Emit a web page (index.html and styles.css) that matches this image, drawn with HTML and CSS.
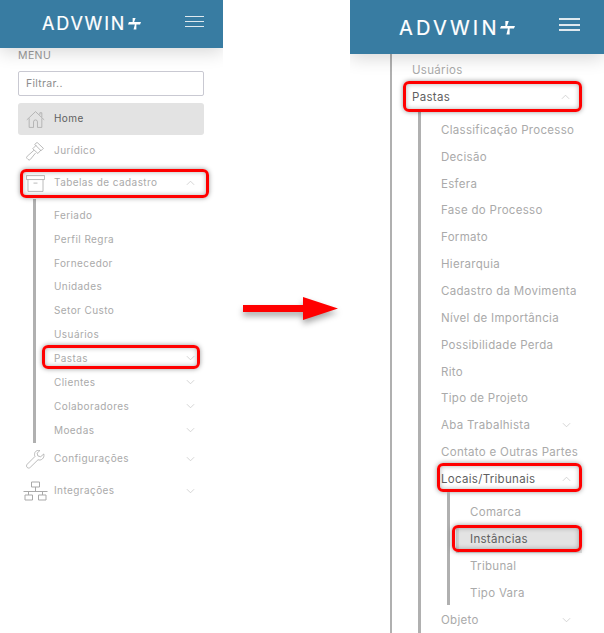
FILE: index.html
```html
<!DOCTYPE html>
<html lang="pt">
<head>
<meta charset="utf-8">
<title>Advwin menu</title>
<link rel="stylesheet" href="styles.css">
</head>
<body>
<svg class="defs" width="0" height="0" aria-hidden="true">
  <symbol id="down" viewBox="0 0 10 6"><path d="M1 1l4 4 4-4" fill="none" stroke="currentColor" stroke-width=".8"/></symbol>
  <symbol id="up" viewBox="0 0 10 6"><path d="M1 5l4-4 4 4" fill="none" stroke="currentColor" stroke-width=".8"/></symbol>
  <symbol id="plus" viewBox="0 0 14 14"><path d="M5 5.500V1h3.200L6.600 5.500H14L13 8H9v5.500H6L7.400 8H0l1-2.500z" fill="#fff"/></symbol>
</svg>
<main class="page">
  <section class="panel panel-left">
    <header class="top top-left">
      <div class="logo"><span>ADVWIN</span><svg class="plus"><use href="#plus"/></svg></div>
      <button class="burger" aria-label="Menu"><i></i><i></i><i></i></button>
    </header>
    <nav class="side">
      <div class="menu-label">MENU</div>
      <input class="filter" placeholder="Filtrar..">
      <div class="row active">
        <svg class="ico" viewBox="0 0 24 24" fill="none" stroke="currentColor"><path d="M1 12.500L12 2l11 10.500M4 10.500V22h5.500v-7a2.500 2.500 0 0 1 5 0v7H20V10.500M17.500 6V3.500H20V9"/></svg>
        <span class="dark">Home</span>
      </div>
      <div class="row">
        <svg class="ico" viewBox="0 0 24 24" fill="none" stroke="currentColor"><path d="M11 3l3-2.500 8 7.500-3 3zM13 4l-4.500 4.500 6.500 6 4-4.500M10 10.500L1.500 18a2 2 0 0 0 0 3l1 1a2 2 0 0 0 3 0L12 14"/></svg>
        <span>Jurídico</span>
      </div>
      <div class="row mark mark-tabelas">
        <svg class="ico" viewBox="0 0 24 24" fill="none" stroke="currentColor"><path d="M0.500 2h23v5H.5zM2.500 7v15h19V7M9.500 11.500h5"/></svg>
        <span>Tabelas de cadastro</span>
        <svg class="chev"><use href="#up"/></svg>
      </div>
      <ul class="sub">
        <li>Feriado</li>
        <li>Perfil Regra</li>
        <li>Fornecedor</li>
        <li>Unidades</li>
        <li>Setor Custo</li>
        <li>Usuários</li>
        <li class="mark mark-pastas">Pastas<svg class="chev"><use href="#down"/></svg></li>
        <li>Clientes<svg class="chev"><use href="#down"/></svg></li>
        <li>Colaboradores<svg class="chev"><use href="#down"/></svg></li>
        <li>Moedas<svg class="chev"><use href="#down"/></svg></li>
      </ul>
      <div class="row">
        <svg class="ico" viewBox="0 0 24 24" fill="none" stroke="currentColor"><path d="M22.500 5l-4 3.500-3.500-1-1-3.500L17.500.8C14-.5 10.500 2 10.800 6c0 1 .2 1.500.5 2.200L1.500 18c-1.300 1.500-1 3 0 4s2.700 1.300 4-.2l9.700-9.500c4 1.500 8.500-2 7.300-7.300z"/></svg>
        <span>Configurações</span>
        <svg class="chev"><use href="#down"/></svg>
      </div>
      <div class="row">
        <svg class="ico ico-net" viewBox="0 0 24 20" fill="none" stroke="currentColor"><path d="M8 1h8v5H8zM12 6v4.500M0 10.500h24M5 10.500V14M19 10.500V14M1.500 14H9v5H1.500zM15 14h7.500v5H15z"/></svg>
        <span>Integrações</span>
        <svg class="chev"><use href="#down"/></svg>
      </div>
    </nav>
  </section>

  <div class="arrow-area">
    <svg class="arrow" width="95" height="23" viewBox="0 0 95 23"><path d="M0 8h60V0l35 11.500L60 23v-8H0z" fill="#f00"/></svg>
  </div>

  <section class="panel panel-right">
    <header class="top top-right">
      <div class="logo logo-big"><span>ADVWIN</span><svg class="plus"><use href="#plus"/></svg></div>
      <button class="burger burger-big" aria-label="Menu"><i></i><i></i><i></i></button>
    </header>
    <nav class="tree">
      <div class="t-row t-first">Usuários</div>
      <div class="t-row mark mark-rpastas"><span class="dark">Pastas</span><svg class="chev"><use href="#up"/></svg></div>
      <ul class="t-sub">
        <li>Classificação Processo</li>
        <li>Decisão</li>
        <li>Esfera</li>
        <li>Fase do Processo</li>
        <li>Formato</li>
        <li>Hierarquia</li>
        <li>Cadastro da Movimenta</li>
        <li>Nível de Importância</li>
        <li>Possibilidade Perda</li>
        <li>Rito</li>
        <li>Tipo de Projeto</li>
        <li>Aba Trabalhista<svg class="chev"><use href="#down"/></svg></li>
        <li>Contato e Outras Partes</li>
        <li class="mark mark-locais"><span class="dark">Locais/Tribunais</span><svg class="chev"><use href="#up"/></svg></li>
        <li class="t-nest">
          <ul class="t-subsub">
            <li>Comarca</li>
            <li class="selected mark mark-inst">Instâncias</li>
            <li>Tribunal</li>
            <li>Tipo Vara</li>
          </ul>
        </li>
        <li>Objeto<svg class="chev"><use href="#down"/></svg></li>
      </ul>
    </nav>
  </section>
</main>
</body>
</html>
```
FILE: styles.css
```css
* { box-sizing: border-box; }
html, body { margin: 0; height: 633px; overflow: hidden; background: #fff; }
body { font-family: Inter, "Noto Sans", sans-serif; color: #aaa; }
ul { list-style: none; margin: 0; padding: 0; }
.defs { position: absolute; }
.page { display: flex; width: 604px; height: 633px; }

.panel { height: 633px; overflow: hidden; background: #fff; }
.panel-left { width: 223px; }
.panel-right { width: 254px; }
.arrow-area { width: 127px; display: flex; align-items: center; justify-content: center; padding: 0 0 17px 8px; }
.arrow { filter: drop-shadow(0 4px 3px rgba(0,0,0,.35)); overflow: visible; }

.top { display: flex; align-items: center; background: #387ca2; box-shadow: 0 4px 18px rgba(0,0,0,.16); position: relative; z-index: 1; }
.top-left { height: 48px; padding: 0 19px 0 42px; justify-content: space-between; }
.top-right { height: 54px; padding: 0 24px 0 49px; justify-content: space-between; }

.logo { display: flex; align-items: center; color: #fff; font-size: 18px; font-weight: 400; line-height: 1; letter-spacing: 1.800px; -webkit-text-stroke: .2px #fff; margin-top: -1px; }
.logo .plus { width: 13px; height: 13px; margin-left: 2px; }
.logo-big { font-size: 20px; letter-spacing: 3.200px; margin-top: 1px; }
.logo-big .plus { width: 15px; height: 15px; margin-left: 0; }

.burger { display: flex; flex-direction: column; gap: 4px; width: 19px; padding: 0; border: 0; background: none; margin-top: -5px; }
.burger i { display: block; height: 1px; background: #dfe9ef; }
.burger-big { width: 21px; gap: 3.500px; margin-top: -5px; }
.burger-big i { height: 2px; }

.side { padding: 0 19px 0 18px; font-size: 10px; }
.menu-label { height: 23px; padding-top: 1px; line-height: 14px; font-size: 10.500px; color: #999; letter-spacing: .4px; }
.filter { display: block; width: 186px; height: 25px; margin: 0 0 7px; padding: 0 7px; border: 1px solid #c9c9d2; border-radius: 2px; font: 10.500px Inter, sans-serif; outline: 0; background: #fff; }
.filter::placeholder { color: #8d8d8d; opacity: 1; letter-spacing: .3px; }

.row { display: flex; align-items: center; height: 32px; padding: 0 9px 0 8px; position: relative; white-space: nowrap; letter-spacing: .42px; }
.row span { margin-bottom: 2px; }
.row.active { border-radius: 3px; background: #e3e3e3; }
.ico { flex: none; width: 19px; height: 19px; margin-right: 9px; color: #a9a9a9; stroke-width: 1; }
.ico-net { width: 25px; height: 20px; margin: 0 6px 0 -3px; }
.dark { color: #5f5f5f; }
.chev { flex: none; width: 9px; height: 6px; margin-left: auto; color: #c4c4c4; }

.sub { margin-left: 15px; padding-top: 4px; height: 244px; border-left: 3px solid #b0b0b0; }
.sub li { display: flex; align-items: center; height: 23.850px; padding: 0 9px 0 18px; position: relative; letter-spacing: .42px; }

.mark { position: relative; }
.mark::after { content: ""; position: absolute; border: 3px solid #f00; border-radius: 6px; box-shadow: 0 0 5px rgba(0,0,0,.4), inset 0 0 5px rgba(0,0,0,.3); pointer-events: none; }
.mark-tabelas::after { inset: 2px -5px 1px 2px; }
.mark-pastas::after { inset: -1px 4px 1px 6px; }
.mark-rpastas::after { inset: -2px 1px -1px 0; }
.mark-locais::after { inset: -2px 5px 0 16px; }
.mark-inst::after { inset: -1px 0 1px 2px; }

.tree { margin-left: 40px; padding-top: 2px; height: 579px; border-left: 2px solid #b0b0b0; font-size: 11.500px; letter-spacing: .3px; }
.t-row { display: flex; align-items: center; height: 28px; margin-left: 12px; padding: 0 11px 0 8px; position: relative; }
.t-first { height: 27px; }
.t-row.t-first, .t-row.mark { margin-left: 11px; padding-left: 9px; }
.t-row.mark { width: 180px; }
.t-row .chev { margin-right: 2px; }
.t-sub { margin-left: 26px; padding-top: 5.500px; height: 530px; border-left: 3px solid #b0b0b0; }
.t-sub > li { display: flex; align-items: center; height: 26.850px; padding: 0 16px 0 20px; width: 166px; white-space: nowrap; position: relative; }
.t-sub > li.t-nest { display: block; height: 114.500px; padding: 0 0 0 26px; }
.t-subsub { padding-top: 6.500px; height: 113px; border-left: 3px solid #b0b0b0; }
.t-subsub li { display: flex; align-items: center; height: 27px; padding-left: 20px; width: 132px; position: relative; }
.selected { background: linear-gradient(to right, transparent 6px, #d4d4d4 6px, #d4d4d4 9px, #e3e3e3 9px); color: #5f5f5f; }
```
